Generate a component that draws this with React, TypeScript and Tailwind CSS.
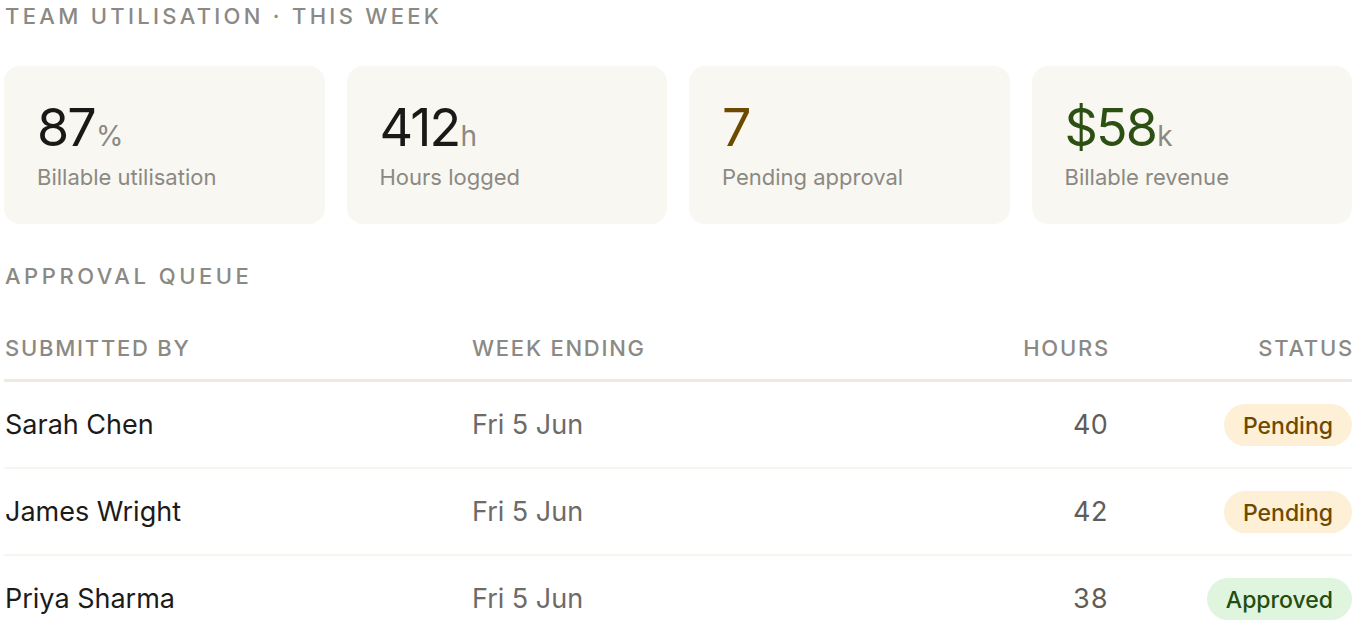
import React from "react";

type Stat = {
  value: string;
  unit?: string;
  label: string;
  color: string;
};

type Row = {
  name: string;
  week: string;
  hours: number;
  status: "Pending" | "Approved";
};

const stats: Stat[] = [
  { value: "87", unit: "%", label: "Billable utilisation", color: "text-[#1a1917]" },
  { value: "412", unit: "h", label: "Hours logged", color: "text-[#1a1917]" },
  { value: "7", label: "Pending approval", color: "text-[#6e4a00]" },
  { value: "$58", unit: "k", label: "Billable revenue", color: "text-[#2c4f12]" },
];

const rows: Row[] = [
  { name: "Sarah Chen", week: "Fri 5 Jun", hours: 40, status: "Pending" },
  { name: "James Wright", week: "Fri 5 Jun", hours: 42, status: "Pending" },
  { name: "Priya Sharma", week: "Fri 5 Jun", hours: 38, status: "Approved" },
];

const StatCard: React.FC<{ stat: Stat }> = ({ stat }) => (
  <div className="rounded-[16px] bg-[#f9f7f2] px-[33px] pt-[36px] pb-[33px]">
    <div className="flex items-baseline leading-none">
      <span className={`text-[52px] tracking-[-0.035em] leading-none ${stat.color}`}>
        {stat.value}
      </span>
      {stat.unit && (
        <span className="ml-[1px] text-[28px] leading-none text-[#8b8984]">{stat.unit}</span>
      )}
    </div>
    <div className="mt-[9px] text-[22px] leading-[1.3] text-[#8b8984]">{stat.label}</div>
  </div>
);

const StatusPill: React.FC<{ status: Row["status"] }> = ({ status }) => {
  const cls =
    status === "Pending"
      ? "bg-[#fdf0d6] text-[#6e4a00]"
      : "bg-[#dff5de] text-[#234d12]";
  return (
    <span
      className={`inline-flex h-[42px] items-center rounded-full px-[19px] pt-[3px] text-[23px] font-medium leading-none ${cls}`}
    >
      {status}
    </span>
  );
};

export default function App() {
  return (
    <div
      className="min-h-screen bg-white"
      style={{ fontFamily: "Inter, 'Noto Sans', sans-serif" }}
    >
      <div className="ml-[4px] w-[1348px]">
        <h1 className="pl-[1px] pt-[2px] text-[22px] font-medium uppercase leading-[1.3] tracking-[0.15em] text-[#8b8984]">
          Team utilisation · This week
        </h1>

        <div className="mt-[35px] grid grid-cols-4 gap-[22px]">
          {stats.map((s) => (
            <StatCard key={s.label} stat={s} />
          ))}
        </div>

        <h2 className="mt-[38px] pl-[1px] text-[22px] font-medium uppercase leading-[1.3] tracking-[0.16em] text-[#8b8984]">
          Approval queue
        </h2>

        <div className="mt-[43px]">
          <div className="flex border-b-[3px] border-[#efe9df] pb-[17px] text-[22px] font-medium uppercase leading-[1.3] tracking-[0.08em] text-[#8b8984]">
            <div className="w-[468px] pl-[1px]">Submitted by</div>
            <div className="flex-1">Week ending</div>
            <div className="w-[150px] text-right">Hours</div>
            <div className="-mr-[2px] w-[244px] text-right">Status</div>
          </div>
          {rows.map((r) => (
            <div
              key={r.name}
              className="flex h-[87px] items-center border-b-2 border-[#f8f5ef] text-[27px] leading-[1.3]"
            >
              <div className="w-[468px] pl-[1px] text-[#1c1b19]">{r.name}</div>
              <div className="flex-1 text-[#6d6b67]">{r.week}</div>
              <div className="w-[150px] text-right tabular-nums text-[#5f5d5a]">{r.hours}</div>
              <div className="w-[244px] text-right">
                <StatusPill status={r.status} />
              </div>
            </div>
          ))}
        </div>
      </div>
    </div>
  );
}
